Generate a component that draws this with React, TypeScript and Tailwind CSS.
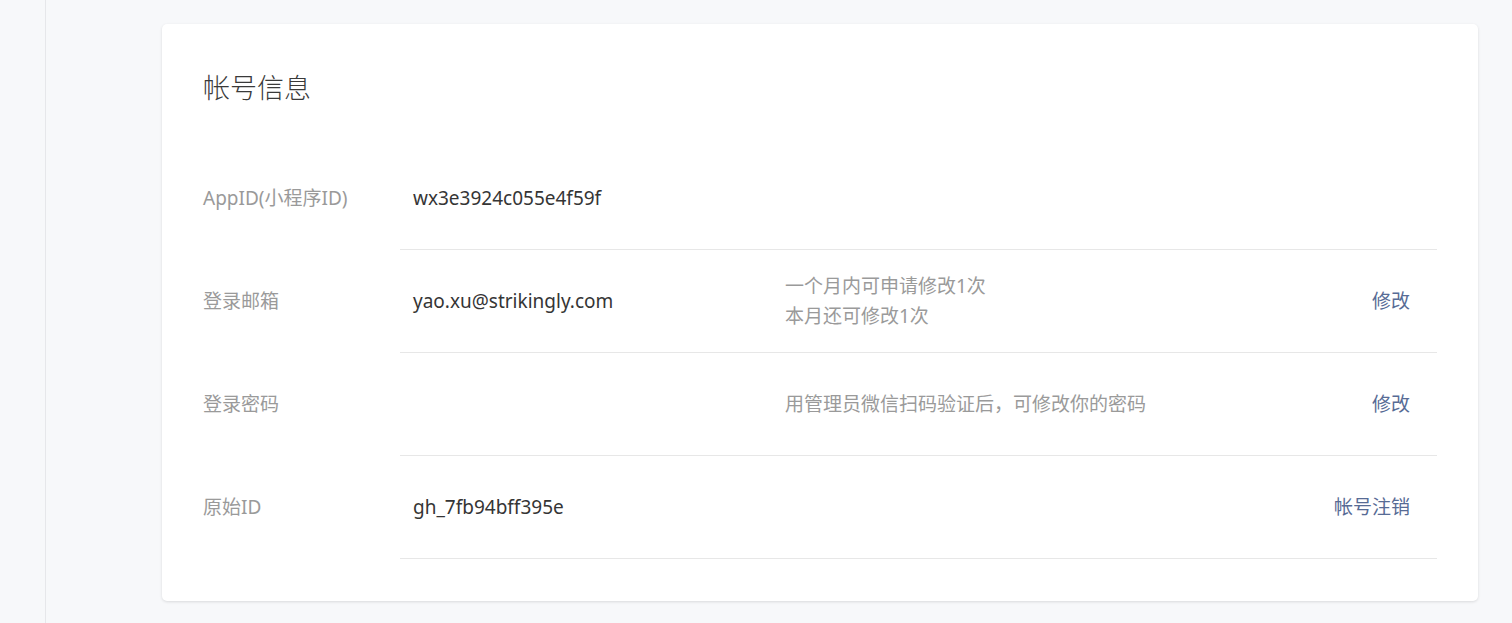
const font = { fontFamily: '"Noto Sans", "Noto Sans CJK SC", sans-serif' };

type Row = {
  label: string;
  value?: string;
  desc?: string[];
  action?: string;
};

const rows: Row[] = [
  { label: 'AppID(小程序ID)', value: 'wx3e3924c055e4f59f' },
  {
    label: '登录邮箱',
    value: 'yao.xu@strikingly.com',
    desc: ['一个月内可申请修改1次', '本月还可修改1次'],
    action: '修改',
  },
  { label: '登录密码', desc: ['用管理员微信扫码验证后，可修改你的密码'], action: '修改' },
  { label: '原始ID', value: 'gh_7fb94bff395e', action: '帐号注销' },
];

export default function App() {
  return (
    <div className="flex h-[623px] w-full bg-[#f7f8fa] overflow-hidden" style={font}>
      <div className="w-[46px] shrink-0 border-r border-[#e6e7ea]" />
      <div className="flex-1 pl-[116px] pr-[34px] pt-[24px]">
        <div className="bg-white rounded-[5px] shadow-[0_1px_3px_rgba(0,0,0,0.12)] px-[41px] pt-[44px] pb-[42px]">
          <h2 className="text-[27px] leading-[40px] text-[#3a3a3a] font-light">帐号信息</h2>
          <div className="mt-[39px]">
            {rows.map((r) => (
              <div key={r.label} className="flex">
                <div className="w-[197px] shrink-0 flex items-center text-[19px] text-[#9a9a9a]">
                  {r.label}
                </div>
                <div className="flex-1 flex items-center h-[103px] border-b border-[#e7e7e7]">
                  <div className="w-[385px] shrink-0 pl-[13px] text-[19px] text-[#353535]">
                    {r.value}
                  </div>
                  <div className="flex-1 text-[19px] leading-[30px] text-[#9a9a9a]">
                    {r.desc?.map((d) => (
                      <div key={d}>{d}</div>
                    ))}
                  </div>
                  {r.action && (
                    <a className="pr-[27px] text-[19px] text-[#576b95] cursor-pointer">{r.action}</a>
                  )}
                </div>
              </div>
            ))}
          </div>
        </div>
      </div>
    </div>
  );
}
